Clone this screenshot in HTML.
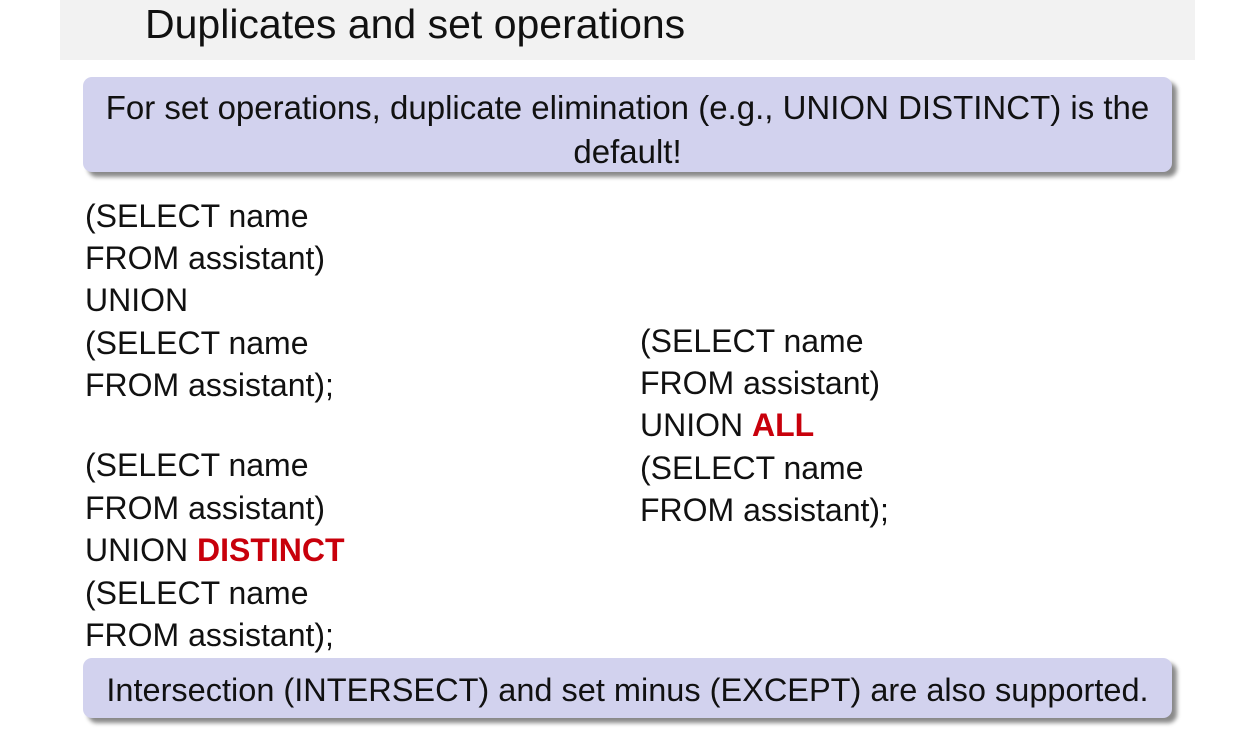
<!DOCTYPE html>
<html><head><meta charset="utf-8"><style>
body{margin:0;width:1258px;height:729px;background:#fff;position:relative;overflow:hidden;font-family:"Liberation Sans",sans-serif;color:#111}
.hdr{position:absolute;left:60px;top:0;width:1135px;height:60px;background:#f2f2f2}
.ttl{position:absolute;left:145px;top:0px;font-size:41px;line-height:48px;white-space:nowrap}
.box{position:absolute;background:#d2d2ee;border-radius:9px;box-shadow:5px 5px 4px #8a8a8a;text-align:center;font-size:33px;line-height:44px}
.l{position:absolute;font-size:32px;line-height:42px;white-space:nowrap}
.r{color:#c8000b;font-weight:bold}
</style></head><body>
<div class="hdr"></div>
<div class="ttl">Duplicates and set operations</div>
<div class="box" style="left:83px;top:77px;width:1089px;height:95px;padding-top:9px;box-sizing:border-box">For set operations, duplicate elimination (e.g., UNION DISTINCT) is the<br>default!</div>
<div class="l" style="left:85px;top:195px">(SELECT name</div>
<div class="l" style="left:85px;top:237px">FROM assistant)</div>
<div class="l" style="left:85px;top:279px">UNION</div>
<div class="l" style="left:85px;top:322px">(SELECT name</div>
<div class="l" style="left:85px;top:364px">FROM assistant);</div>
<div class="l" style="left:85px;top:444px">(SELECT name</div>
<div class="l" style="left:85px;top:487px">FROM assistant)</div>
<div class="l" style="left:85px;top:529px">UNION <span class="r">DISTINCT</span></div>
<div class="l" style="left:85px;top:572px">(SELECT name</div>
<div class="l" style="left:85px;top:614px">FROM assistant);</div>
<div class="l" style="left:640px;top:320px">(SELECT name</div>
<div class="l" style="left:640px;top:362px">FROM assistant)</div>
<div class="l" style="left:640px;top:404px">UNION <span class="r">ALL</span></div>
<div class="l" style="left:640px;top:447px">(SELECT name</div>
<div class="l" style="left:640px;top:489px">FROM assistant);</div>
<div class="box" style="left:83px;top:658px;width:1089px;height:60px;line-height:64px;font-size:32.5px">Intersection (INTERSECT) and set minus (EXCEPT) are also supported.</div>
</body></html>
